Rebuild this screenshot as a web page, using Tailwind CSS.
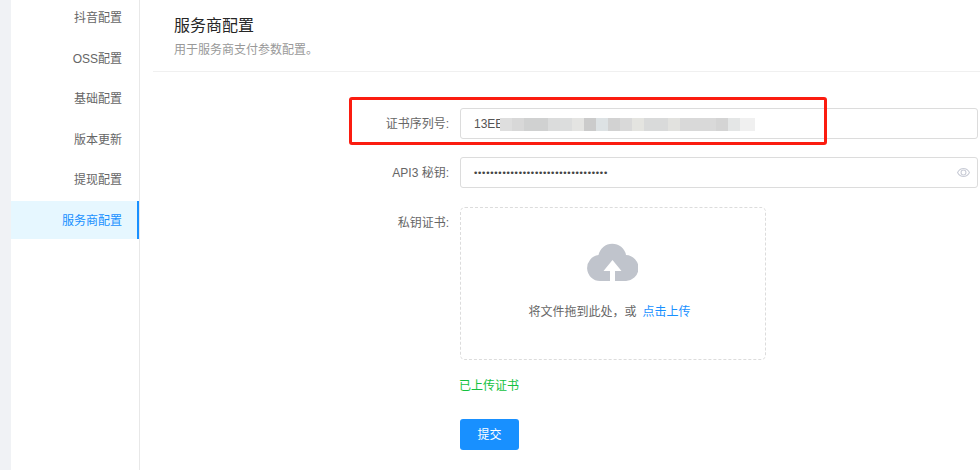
<!DOCTYPE html>
<html lang="zh-CN">
<head>
<meta charset="utf-8">
<script src="https://cdn.jsdelivr.net/npm/@tailwindcss/browser@4"></script>
</head>
<body class="w-[980px] h-[470px] overflow-hidden bg-white font-['Liberation_Sans','Noto_Sans_CJK_SC',sans-serif] text-[12px] leading-[20px] text-[#666]">
<div class="relative flex h-[470px] bg-[#f0f2f5] pl-[11px]">
  <aside class="w-[129px] shrink-0 bg-white border-r border-[#e8e8e8]">
    <nav class="-mt-[2px] flex flex-col gap-[2.6px] text-right">
      <a class="h-[38px] pt-[2px] flex items-center justify-end pr-[17px]">抖音配置</a>
      <a class="h-[38px] pt-[2px] flex items-center justify-end pr-[17px]">OSS配置</a>
      <a class="h-[38px] pt-[2px] flex items-center justify-end pr-[17px]">基础配置</a>
      <a class="h-[38px] pt-[2px] flex items-center justify-end pr-[17px]">版本更新</a>
      <a class="h-[38px] pt-[2px] flex items-center justify-end pr-[17px]">提现配置</a>
      <a class="h-[38px] pt-[2px] flex items-center justify-end pr-[15px] bg-[#e6f7ff] border-r-2 border-[#1890ff] text-[#1890ff]">服务商配置</a>
    </nav>
  </aside>
  <main class="flex-1 min-w-0 bg-white pl-[13px]">
    <header class="h-[72px] pl-[21px] pt-[16px] border-b border-[#f0f0f0]">
      <h1 class="text-[16px] leading-[20px] text-[#262626]">服务商配置</h1>
      <p class="mt-[4px] text-[#999] leading-[20px]">用于服务商支付参数配置。</p>
    </header>
    <form class="pt-[36px]">
      <div class="flex items-center h-[31px]">
        <label class="w-[296px] text-right text-[#666]">证书序列号:</label>
        <div class="ml-[11px] w-[518px] h-[31px] shrink-0 border border-[#dcdcdc] rounded-[3px] flex items-center pl-[13px] text-[#555] relative">13EE
          <div class="absolute left-[39px] top-[9px] w-[255px] h-[13px] flex">
            <i class="w-[12px] bg-[#dedede]"></i><i class="w-[12px] bg-[#d8d8d8]"></i><i class="w-[24px] bg-[#d0d1d1]"></i><i class="w-[12px] bg-[#dbdcdc]"></i><i class="w-[12px] bg-[#dcdddd]"></i><i class="w-[12px] bg-[#e4e4e2]"></i><i class="w-[12px] bg-[#cbcbcb]"></i><i class="w-[12px] bg-[#dde2e4]"></i><i class="w-[12px] bg-[#d2d2d2]"></i><i class="w-[12px] bg-[#d9d9d9]"></i><i class="w-[12px] bg-[#e4e4e0]"></i><i class="w-[24px] bg-[#d9dada]"></i><i class="w-[12px] bg-[#e2e2df]"></i><i class="w-[36px] bg-[#d9d9d9]"></i><i class="w-[12px] bg-[#d4d4d4]"></i><i class="w-[12px] bg-[#e4e6e6]"></i><i class="w-[15px] bg-[#f0f0f0]"></i>
          </div>
        </div>
      </div>
      <div class="flex items-center h-[31px] mt-[18px]">
        <label class="w-[296px] text-right text-[#666]">API3 秘钥:</label>
        <div class="ml-[11px] w-[518px] h-[31px] shrink-0 border border-[#dcdcdc] rounded-[3px] flex items-center justify-between pl-[12px] pr-[7px]">
          <span class="text-[#444] text-[9px] tracking-[-1.25px] font-['DejaVu_Sans',sans-serif]">•••••••••••••••••••••••••••••••••</span>
          <svg class="w-[13px] h-[13px]" viewBox="0 0 24 24" fill="none" stroke="#c9ccd6" stroke-width="2"><path d="M1 12s4-7.5 11-7.5S23 12 23 12s-4 7.5-11 7.5S1 12 1 12z"/><circle cx="12" cy="12" r="4.5"/></svg>
        </div>
      </div>
      <div class="flex items-start mt-[19px]">
        <label class="w-[296px] text-right text-[#666] mt-[6px]">私钥证书:</label>
        <div class="ml-[11px]">
          <div class="w-[306px] h-[153px] border border-dashed border-[#dcdcdc] rounded-[5px] flex flex-col items-center pt-[35px]">
            <svg class="w-[51px] h-[38px] -ml-[1px]" viewBox="0 0 51 38"><path fill="#c0c4cc" d="M13 38A13 13 0 0 1 11.5 12.1 14 14 0 0 1 39 12 13 13 0 0 1 38 38H28V28H34.5L25.5 17 16.5 28H23V38Z"/></svg>
            <p class="mt-[21px] mr-[7px] text-[#666]">将文件拖到此处，或<span class="ml-[6px] text-[#1890ff]">点击上传</span></p>
          </div>
          <p class="mt-[16px] -ml-[1px] text-[#13c23f]">已上传证书</p>
          <button type="button" class="mt-[23px] block w-[59px] h-[31px] rounded-[3px] bg-[#1890ff] text-white text-[12px]">提交</button>
        </div>
      </div>
    </form>
  </main>
  <div class="absolute left-[349px] top-[97px] w-[478px] h-[48px] border-[3px] border-[#fb1c10] rounded-[3px]"></div>
</div>
</body>
</html>
